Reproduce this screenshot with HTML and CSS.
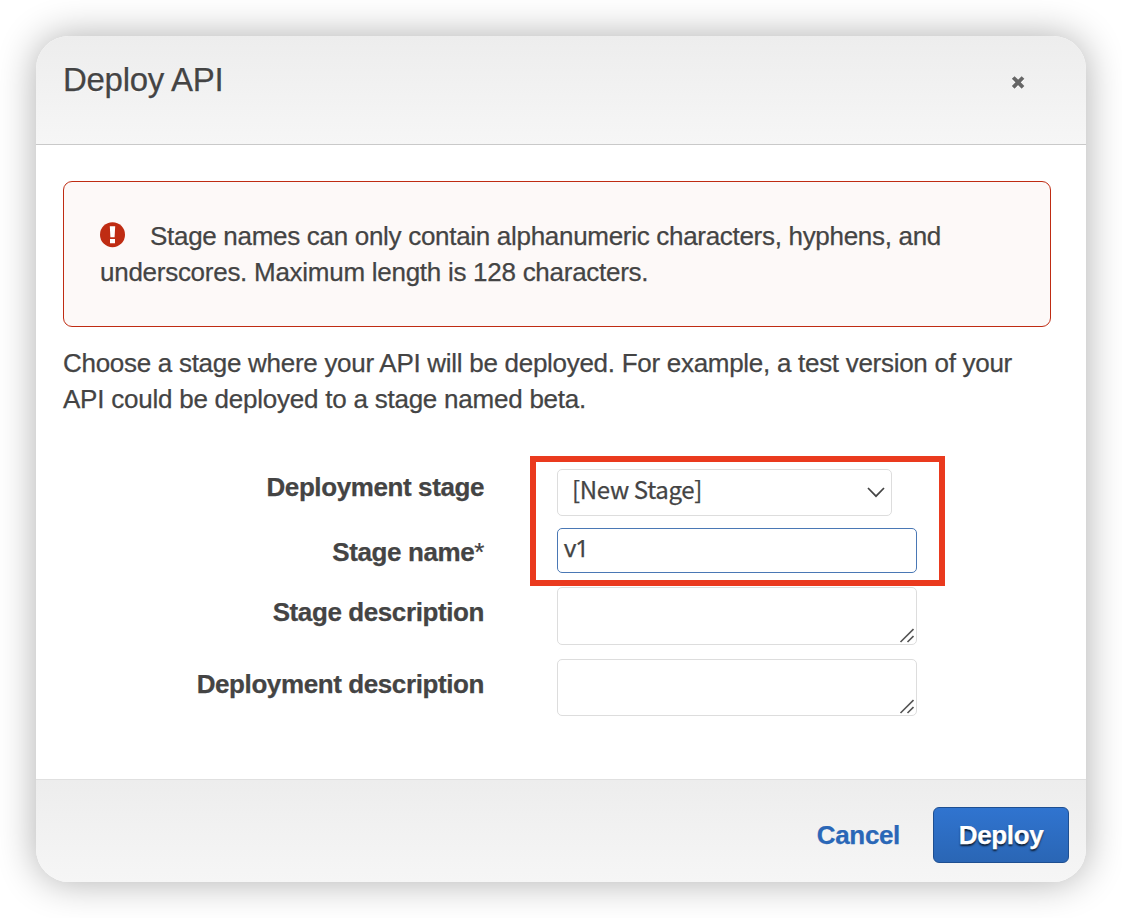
FILE: index.html
```html
<!DOCTYPE html>
<html lang="en">
<head>
<meta charset="utf-8">
<title>Deploy API</title>
<link rel="stylesheet" href="styles.css">
</head>
<body>
<div class="dialog" role="dialog" aria-labelledby="dialog-title">
  <header class="dialog-header">
    <h1 class="dialog-title" id="dialog-title">Deploy API</h1>
    <button class="close" type="button" aria-label="Close">
      <svg width="14" height="15" viewBox="0 0 14 15"><path class="close-glow" d="M2.4 3.8l9.4 9.4M11.8 3.8l-9.4 9.4"/><path class="close-mark" d="M2.2 2.5l9.8 9.8M12 2.5l-9.8 9.8"/></svg>
    </button>
  </header>
  <main class="dialog-body">
    <div class="alert" role="alert">
      <svg class="alert-icon" width="26" height="26" viewBox="0 0 26 26"><circle cx="12.5" cy="12.7" r="12.5"/><path d="M9.8 4.2h5.4l-.6 11h-4.2zM10 16.9h5v4.4h-5z"/></svg><span class="alert-lead">Stage names can only contain alphanumeric characters, hyphens, and</span><br>underscores. Maximum length is 128 characters.
    </div>
    <p class="intro">Choose a stage where your API will be deployed. For example, a test version of your<br><span class="intro-end">API could be deployed to a stage named beta.</span></p>
    <form class="form">
      <div class="highlight"></div>
      <div class="row row-stage">
        <label class="label">Deployment stage</label>
        <div class="select"><span>[New Stage]</span>
          <svg width="18" height="12" viewBox="0 0 18 12"><path d="M1 1l8 8.2L17 1"/></svg>
        </div>
      </div>
      <div class="row row-name">
        <label class="label">Stage name<span class="required">*</span></label>
        <div class="input">v1</div>
      </div>
      <div class="row row-desc">
        <label class="label">Stage description</label>
        <div class="textarea"><svg width="15" height="15" viewBox="0 0 15 15"><path d="M1.5 14L14.5 1M8.5 14l6-6"/></svg></div>
      </div>
      <div class="row row-deploy">
        <label class="label">Deployment description</label>
        <div class="textarea"><svg width="15" height="15" viewBox="0 0 15 15"><path d="M1.5 14L14.5 1M8.5 14l6-6"/></svg></div>
      </div>
    </form>
  </main>
  <footer class="dialog-footer">
    <button class="cancel" type="button">Cancel</button>
    <button class="deploy" type="button">Deploy</button>
  </footer>
</div>
</body>
</html>
```
FILE: styles.css
```css
* { box-sizing: border-box; }
body {
  margin: 0;
  padding: 36px;
  height: 918px;
  overflow: hidden;
  background: #fff;
  color: #444;
  font: 26px/36px "Liberation Sans", Arial, sans-serif;
  letter-spacing: -.285px;
  -webkit-text-stroke: .25px;
}
button { border: 0; padding: 0; background: none; font: inherit; }
.dialog {
  display: flex;
  flex-direction: column;
  width: 1050px;
  height: 846px;
  border-radius: 33px;
  overflow: hidden;
  background: #fff;
  box-shadow: 0 0 38px rgba(0, 0, 0, .32);
}
.dialog-header {
  display: flex;
  justify-content: space-between;
  height: 109px;
  padding: 25px 61px 0 27px;
  border-bottom: 1px solid #c9c9c9;
  background: linear-gradient(#ededed, #f6f6f6);
}
.dialog-title {
  margin: 0;
  font-size: 33px;
  font-weight: 400;
  line-height: 38px;
  letter-spacing: -.3px;
  text-shadow: 0 1px 1px #fff;
}
.close { align-self: flex-start; height: 15px; margin-top: 14px; display: flex; }
.close path { fill: none; stroke-width: 3.8; }
.close .close-glow { stroke: #fff; }
.close .close-mark { stroke: #666; }
.dialog-body { flex: 1; padding: 36px 35px 0 27px; }
.alert {
  height: 146px;
  padding: 36px;
  border: 1px solid #bf2c13;
  border-radius: 9px;
  background: #fdf9f8;
  letter-spacing: -.27px;
  white-space: nowrap;
}
.alert-lead { letter-spacing: -.3px; }
.alert-icon { margin: 0 24px 0 0; vertical-align: -3px; fill: #bf2c13; }
.alert-icon path { fill: #fff; }
.intro { margin: 18px 0 0; white-space: nowrap; }
.intro-end { letter-spacing: -.235px; }
.form { position: relative; padding-top: 52px; }
.row {
  display: grid;
  grid-template-columns: 421px 360px;
  column-gap: 73px;
  align-items: start;
}
.row-stage, .row-name { height: 59px; }
.row-desc { height: 72px; }
.label { text-align: right; font-weight: 700; letter-spacing: -.4px; white-space: nowrap; }
.row-name .label { padding-top: 6px; }
.row-desc .label, .row-deploy .label { padding-top: 7px; }
.required { font-weight: 400; font-size: 26px; }
.select, .input, .textarea { border: 1px solid #ddd; border-radius: 5px; background: #fff; }
.select, .input {
  font-family: "Noto Sans CJK KR", "Noto Sans", sans-serif;
  font-size: 24px;
  letter-spacing: -.33px;
  white-space: nowrap;
}
.select {
  display: flex;
  justify-content: space-between;
  width: 335px;
  height: 47px;
  padding: 1px 6px 0 14px;
}
.select svg { margin-top: 16px; }
.select path, .textarea path { fill: none; stroke: #444; stroke-width: 1.7; }
.textarea path { stroke: #555; stroke-width: 1.6; }
.input {
  height: 45px;
  padding: 1px 6px;
  border-color: #4a78b5;
  font-family: "Noto Sans", sans-serif;
  letter-spacing: -1px;
}
.textarea { display: flex; justify-content: flex-end; align-items: flex-end; height: 58px; padding: 0 2px 1px; }
.row-deploy .textarea { height: 57px; }
.highlight {
  position: absolute;
  z-index: 1;
  top: 39px;
  left: 467px;
  width: 415px;
  height: 130px;
  border: 6px solid #ea3a1e;
}
.dialog-footer {
  display: flex;
  justify-content: flex-end;
  gap: 33px;
  height: 103px;
  padding: 27px 17px 0;
  border-top: 1px solid #e0e0e0;
  background: linear-gradient(#ededed, #f6f6f6);
}
.cancel, .deploy { height: 56px; font-weight: 700; letter-spacing: -.35px; }
.cancel { color: #2a67b7; }
.deploy {
  width: 136px;
  border: 1px solid #1e4f91;
  border-radius: 6px;
  background: linear-gradient(#3074d0, #2a66b5);
  color: #fff;
  text-shadow: 0 2px 2px rgba(0, 0, 0, .75);
}
```
